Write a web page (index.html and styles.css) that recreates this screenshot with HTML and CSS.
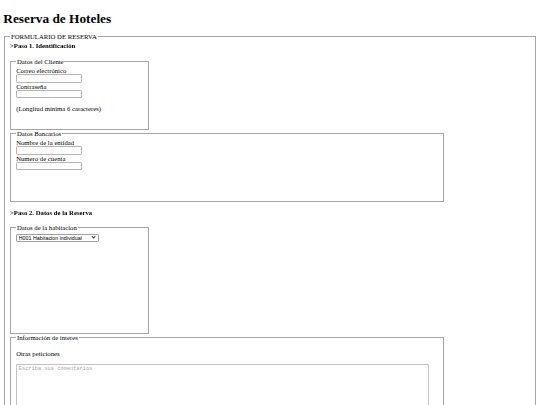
FILE: index.html
```html
<!DOCTYPE html>
<html lang="es">
<head>
<meta charset="utf-8">
<title>Reserva de Hoteles</title>
<link rel="stylesheet" href="styles.css">
</head>
<body>
<h1>Reserva de Hoteles</h1>
<form>
  <fieldset class="main">
    <legend>FORMULARIO DE RESERVA</legend>
    <p class="paso">&gt;Paso 1. Identificación</p>
    <fieldset class="box narrow cliente">
      <legend>Datos del Cliente</legend>
      <label for="correo">Correo electrónico</label><br>
      <input id="correo" class="campo" type="email"><br>
      <label for="clave">Contraseña</label><br>
      <input id="clave" class="campo" type="password"><br>
      <p class="note">(Longitud mínima 6 caracteres)</p>
    </fieldset>
    <fieldset class="box wide bancarios">
      <legend>Datos Bancarios</legend>
      <label for="entidad">Nombre de la entidad</label><br>
      <input id="entidad" class="campo" type="text"><br>
      <label for="cuenta">Numero de cuenta</label><br>
      <input id="cuenta" class="campo" type="text"><br>
    </fieldset>
    <p class="paso paso2">&gt;Paso 2. Datos de la Reserva</p>
    <fieldset class="box narrow habitacion">
      <legend>Datos de la habitacion</legend>
      <span class="select-wrap">
        <select class="selector">
          <option>H001 Habitacion individual</option>
        </select>
      </span>
    </fieldset>
    <fieldset class="box wide interes">
      <legend>Información de interes</legend>
      <p>Otras peticiones</p>
      <textarea class="comentarios" placeholder="Escriba sus comentarios"></textarea>
    </fieldset>
  </fieldset>
</form>
</body>
</html>
```
FILE: styles.css
```css
html {
  zoom: 0.41;
}
body {
  font-family: "Liberation Serif", "Times New Roman", serif;
  font-size: 16.4px;
  color: #000;
  background: #fff;
  overflow: hidden;
}
h1 {
  font-size: 32.5px;
  margin: 18px 0 15px;
}
fieldset {
  border: 2px solid #a6a6a6;
  margin: 0 2px;
}
legend {
  padding: 0 2px;
}
.paso {
  margin: 0 0 21px;
  font-weight: bold;
  color: #000;
  will-change: transform;
}
.paso2 {
  margin-top: 17px;
}
.box {
  margin: 0;
}
.narrow {
  width: 310px;
}
.wide {
  width: 1030px;
}
.cliente {
  height: 155px;
}
.bancarios {
  height: 155px;
}
.habitacion {
  height: 247px;
}
.campo {
  box-sizing: border-box;
  width: 161px;
  height: 21px;
  border: 2px solid #b5b5b5;
  border-radius: 3px;
  padding: 1px 2px;
  margin: 0;
}
.note {
  margin: 16px 0 0;
}
.select-wrap {
  position: relative;
  display: inline-block;
}
.selector {
  appearance: none;
  -webkit-appearance: none;
  box-sizing: border-box;
  width: 202px;
  height: 19px;
  font-family: "Liberation Sans", Arial, sans-serif;
  font-size: 13px;
  color: #000;
  background: #fff;
  border: 2px solid #a0a0a0;
  border-radius: 3px;
  padding: 0 18px 0 4px;
  margin: 0;
}
.select-wrap::after {
  content: "";
  position: absolute;
  right: 9px;
  top: 4px;
  width: 5px;
  height: 5px;
  border-right: 2px solid #333;
  border-bottom: 2px solid #333;
  transform: rotate(45deg);
  pointer-events: none;
}
.interes p {
  margin: 16px 0;
}
.comentarios {
  box-sizing: border-box;
  width: 1007px;
  height: 200px;
  border: 2px solid #c4c4c4;
  border-radius: 2px;
  font-family: "Liberation Mono", "Courier New", monospace;
  font-size: 13px;
  padding: 2px 4px;
}
.comentarios::placeholder {
  color: #a9a9a9;
}
```
